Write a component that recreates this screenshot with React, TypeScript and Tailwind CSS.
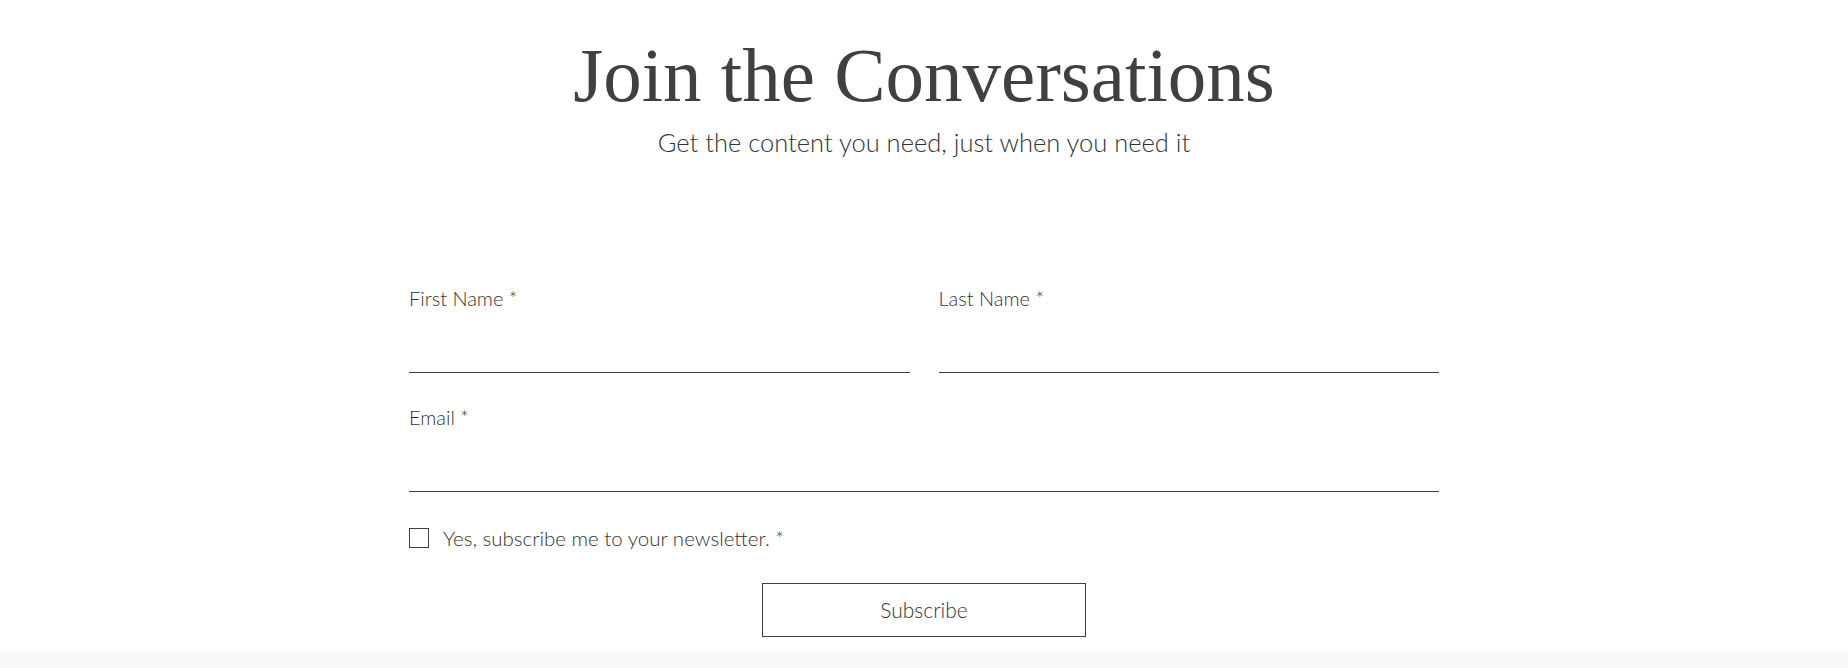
import React from "react";

function Field({ label, className = "" }: { label: string; className?: string }) {
  return (
    <div className={"flex flex-col " + className}>
      <label className="text-[20px] leading-[22px] text-[#333333] font-light">{label}</label>
      <input
        type="text"
        className="mt-[42px] h-[22px] w-full border-b border-[#404040] bg-transparent outline-none"
      />
    </div>
  );
}

export default function App() {
  return (
    <div
      className="w-[1848px] h-[668px] bg-white flex flex-col overflow-hidden"
      style={{ fontFamily: "Lato, 'Noto Sans', sans-serif" }}
    >
      <div className="flex-1 flex flex-col items-center">
        <h1
          className="mt-[35px] text-[77px] leading-[80px] text-[#404040]"
          style={{ fontFamily: "'Liberation Serif', serif" }}
        >
          Join the Conversations
        </h1>
        <p className="mt-[12px] text-[25.5px] leading-[30px] text-[#333333] font-light">
          Get the content you need, just when you need it
        </p>

        <form className="mt-[130px] w-[1030px] flex flex-col">
          <div className="grid grid-cols-2 gap-x-[29px]">
            <Field label="First Name *" />
            <Field label="Last Name *" />
          </div>
          <Field label="Email *" className="mt-[33px]" />
          <div className="mt-[35px] flex items-center gap-[14px]">
            <span className="w-[20px] h-[20px] border border-[#404040] bg-white" />
            <span className="text-[20.5px] leading-[22px] text-[#333333] font-light">
              Yes, subscribe me to your newsletter. *
            </span>
          </div>
          <div className="mt-[34px] flex justify-center">
            <button
              type="button"
              className="w-[324px] h-[54px] border border-[#404040] bg-white text-[21px] text-[#333333] font-light"
            >
              Subscribe
            </button>
          </div>
        </form>
      </div>
      <div className="h-[16px] bg-[#f7f8f8]" />
    </div>
  );
}
